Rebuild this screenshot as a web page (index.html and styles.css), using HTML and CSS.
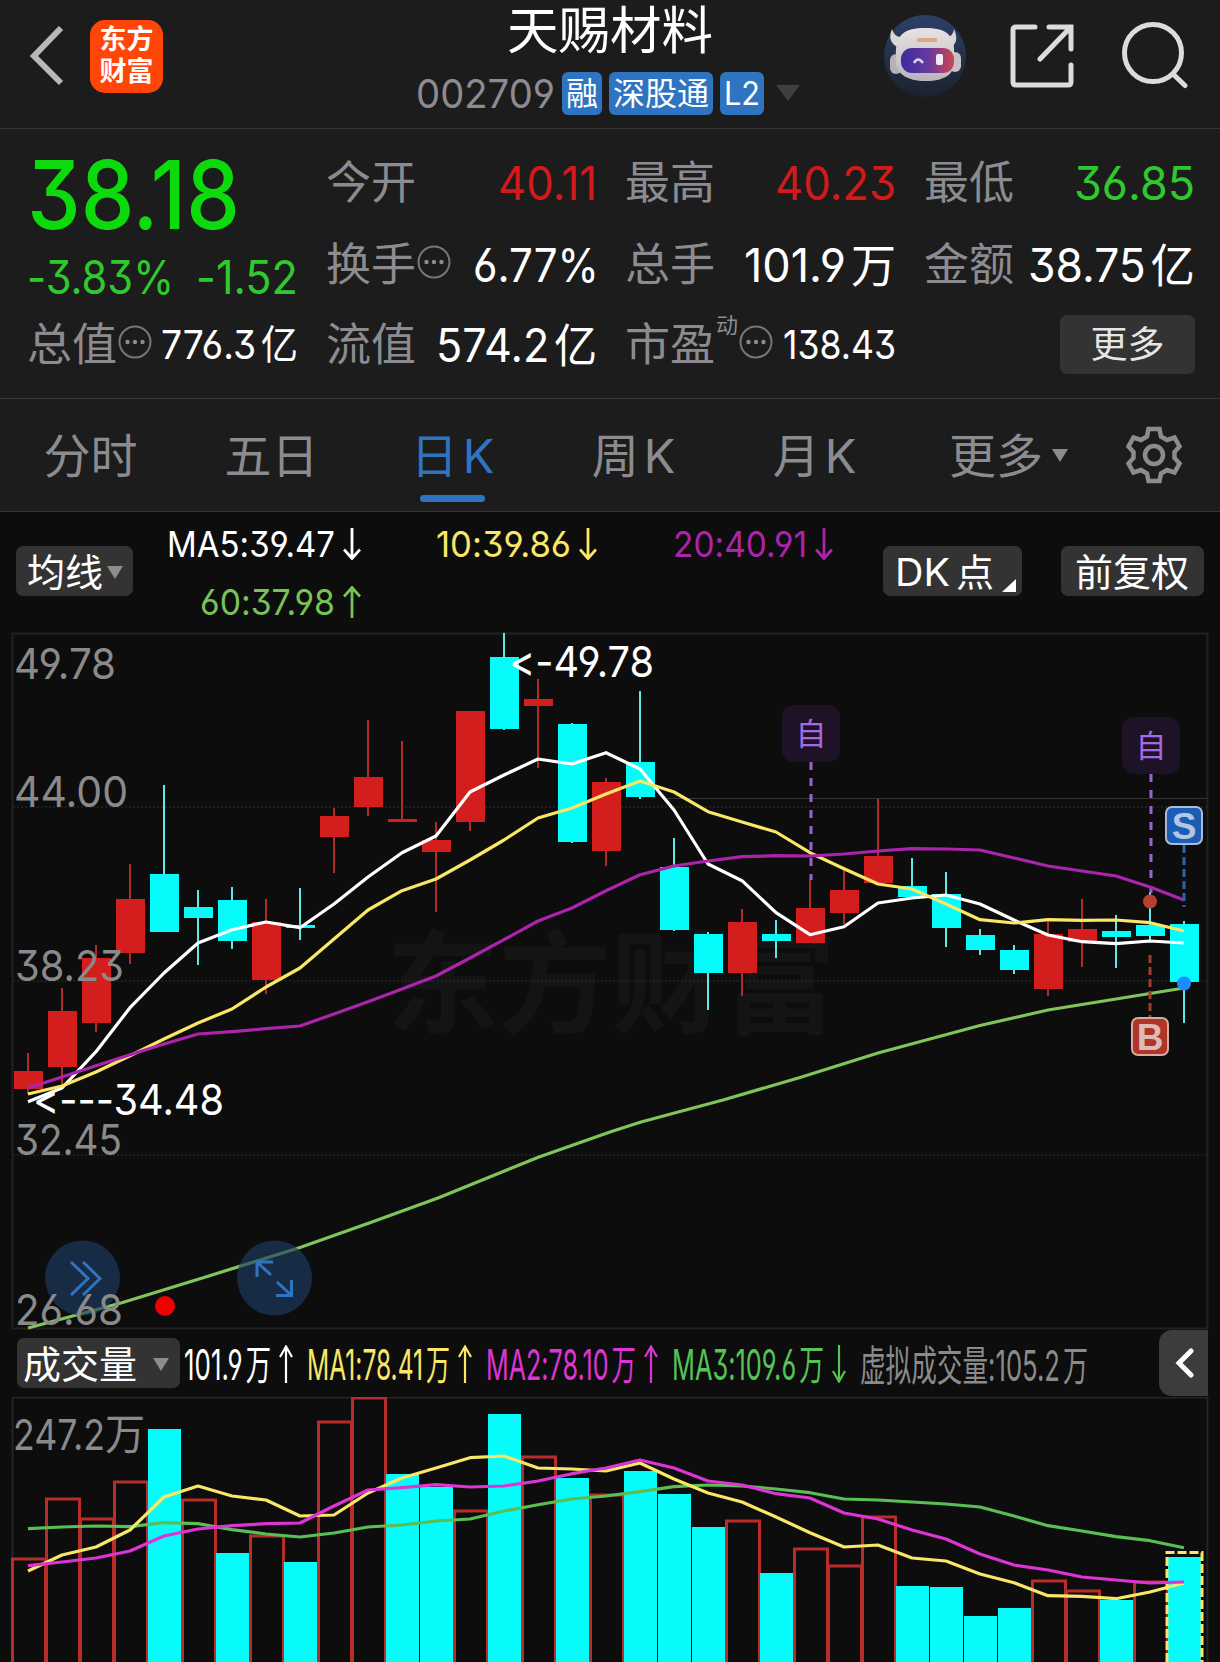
FILE: index.html
```
<!DOCTYPE html>
<html lang="zh-CN">
<head>
    <meta charset="UTF-8">
    <meta name="viewport" content="width=device-width, initial-scale=1.0">
    <title>天赐材料 002709</title>
    <link rel="stylesheet" href="styles.css">
</head>
<body>

<!-- shared icons -->
<svg class="defs" width="0" height="0">
    <symbol id="i-down" viewBox="0 0 18 32"><path d="M9 0V30M1 21.500L9 30.500L17 21.500"/></symbol>
    <symbol id="i-up" viewBox="0 0 18 32"><path d="M9 32V2M1 10.500L9 1.500L17 10.500"/></symbol>
    <symbol id="i-down-tall" viewBox="0 0 14 38"><path d="M7 0V36M1 26L7 36.500L13 26"/></symbol>
    <symbol id="i-up-tall" viewBox="0 0 14 38"><path d="M7 38V2M1 12L7 1.500L13 12"/></symbol>
    <symbol id="i-dots" viewBox="0 0 34 34">
        <circle cx="17" cy="17" r="15.500" fill="none" stroke="#77777a" stroke-width="2"/>
        <circle cx="9.500" cy="17" r="2.200"/><circle cx="17" cy="17" r="2.200"/><circle cx="24.500" cy="17" r="2.200"/>
    </symbol>
</svg>

<header class="header">
    <div class="header-left">
        <svg class="back" width="40" height="64" viewBox="0 0 40 64"><path d="M35 4L8 32L35 59"/></svg>
        <div class="logo">东方<br>财富</div>
    </div>
    <div class="header-title">
        <h1>天赐材料</h1>
        <div class="code-row">
            <span class="code" data-w="139">002709</span>
            <span class="tag">融</span>
            <span class="tag">深股通</span>
            <span class="tag"><span data-w="36">L2</span></span>
            <i class="tri tri-code"></i>
        </div>
    </div>
    <div class="header-right">
        <svg width="84" height="84" viewBox="0 0 84 84">
            <defs>
                <linearGradient id="bg" x1="0" y1="0" x2="0" y2="1"><stop offset="0" stop-color="#2c4067"/><stop offset="1" stop-color="#1c222d"/></linearGradient>
                <linearGradient id="visor" x1="0" y1="0" x2="1" y2="0"><stop offset="0" stop-color="#3a2c9c"/><stop offset=".55" stop-color="#6b3a9e"/><stop offset="1" stop-color="#d0454f"/></linearGradient>
                <linearGradient id="helm" x1="0" y1="0" x2="0" y2="1"><stop offset="0" stop-color="#e6e3e4"/><stop offset="1" stop-color="#b9b4ba"/></linearGradient>
            </defs>
            <circle cx="42" cy="42" r="41" fill="url(#bg)"/>
            <path d="M9 15C5 24 8 31 17 34L24 22C15 25 11 21 9 15ZM71 15C75 24 74 31 66 34L58 22C67 25 70 21 71 15Z" fill="#d9d6d8"/>
            <rect x="7" y="40" width="12" height="20" rx="6" fill="#b5b1b6"/>
            <rect x="66" y="38" width="12" height="20" rx="6" fill="#c5c1c5"/>
            <path d="M13 42C12 20 22 14 42 14S73 20 71 42C74 60 62 67 43 67S11 60 13 42Z" fill="url(#helm)"/>
            <rect x="18" y="34" width="53" height="25" rx="11" fill="url(#visor)"/>
            <path d="M34 26H54" stroke="#d9a98a" stroke-width="4"/>
            <path d="M31 49Q35 42 40 49" fill="none" stroke="#dcd6f5" stroke-width="2.500"/>
            <rect x="53" y="40" width="7" height="11" rx="2" fill="#f4e9f4"/>
        </svg>
        <svg class="line-icon" width="66" height="66" viewBox="0 0 66 66"><path d="M26 4H7Q4 4 4 7V59Q4 62 7 62H59Q62 62 62 59V42M40 4H62V26M60 6L31 36"/></svg>
        <svg class="line-icon" width="68" height="68" viewBox="0 0 68 68"><circle cx="32" cy="32" r="28.500"/><path d="M52 53L64 64.500"/></svg>
    </div>
</header>

<section class="quote">
    <div class="price-cell">
        <div class="price"><span data-w="213">38.18</span></div>
        <div class="change"><span data-w="147">-3.83%</span><span data-w="102">-1.52</span></div>
    </div>
    <div class="stat"><label>今开</label><b class="red" data-w="99">40.11</b></div>
    <div class="stat"><label>最高</label><b class="red" data-w="121">40.23</b></div>
    <div class="stat"><label>最低</label><b class="green" data-w="121">36.85</b></div>
    <div class="stat"><label>换手</label><svg class="dots"><use href="#i-dots"/></svg><b class="pct" data-w="126">6.77%</b></div>
    <div class="stat"><label>总手</label><b data-w="152">101.9<i>万</i></b></div>
    <div class="stat"><label>金额</label><b data-w="167">38.75<i>亿</i></b></div>
    <div class="stat"><label>总值</label><svg class="dots"><use href="#i-dots"/></svg><b class="small" data-w="137">776.3<i>亿</i></b></div>
    <div class="stat"><label>流值</label><b data-w="161">574.2<i>亿</i></b></div>
    <div class="stat"><label>市盈</label><sup>动</sup><svg class="dots"><use href="#i-dots"/></svg><b class="small" data-w="113">138.43</b></div>
    <div class="stat"><button class="more">更多</button></div>
</section>

<nav class="tabs">
    <a>分时</a>
    <a>五日</a>
    <a class="active">日<span class="k">K</span></a>
    <a>周<span class="k">K</span></a>
    <a>月<span class="k">K</span></a>
    <a class="tab-more">更多<i class="tri"></i></a>
    <svg class="gear" width="58" height="60" viewBox="0 0 58 60">
        <path d="M23.500 4H34.500L36 11.500L42 15L49.500 12.500L54.500 21.500L49.500 27V33L54.500 38.500L49.500 47.500L42 45L36 48.500L34.500 56H23.500L22 48.500L16 45L8.500 47.500L3.500 38.500L8.500 33V27L3.500 21.500L8.500 12.500L16 15L22 11.500Z"/>
        <circle cx="29" cy="30" r="9"/>
    </svg>
</nav>

<section class="ma-bar">
    <button class="chip chip-ma">均线<i class="tri"></i></button>
    <div class="ma-list">
        <span class="c-white"><em data-w="168">MA5:39.47</em><svg class="arrow"><use href="#i-down"/></svg></span>
        <span class="c-yellow"><em data-w="135">10:39.86</em><svg class="arrow"><use href="#i-down"/></svg></span>
        <span class="c-purple"><em data-w="134">20:40.91</em><svg class="arrow"><use href="#i-down"/></svg></span>
        <span class="c-green"><em data-w="135">60:37.98</em><svg class="arrow"><use href="#i-up"/></svg></span>
    </div>
    <button class="chip chip-dk"><em data-w="55">DK</em>点<i class="corner"></i></button>
    <button class="chip chip-fq">前复权</button>
</section>

<svg class="chart" id="price-chart" width="1220" height="698" viewBox="0 632 1220 698"></svg>

<section class="vol-bar">
    <button class="chip chip-vol">成交量<i class="tri"></i></button>
    <div class="vol-list">
        <span class="c-white"><em data-w="87">101.9<i>万</i></em><svg class="arrow"><use href="#i-up-tall"/></svg></span>
        <span class="c-yellow"><em data-w="143">MA1:78.41<i>万</i></em><svg class="arrow"><use href="#i-up-tall"/></svg></span>
        <span class="c-pink"><em data-w="150">MA2:78.10<i>万</i></em><svg class="arrow"><use href="#i-up-tall"/></svg></span>
        <span class="c-lime"><em data-w="152">MA3:109.6<i>万</i></em><svg class="arrow"><use href="#i-down-tall"/></svg></span>
        <span class="c-gray"><em data-w="228">虚拟成交量:105.2<i>万</i></em></span>
    </div>
    <button class="collapse"><svg width="20" height="30" viewBox="0 0 20 30"><path d="M17 3L5 15L17 27"/></svg></button>
</section>

<svg class="chart" id="vol-chart" width="1220" height="265" viewBox="0 1397 1220 265"></svg>

<script src="chart.js"></script>
</body>
</html>
```
FILE: styles.css
```
* {
    box-sizing: border-box;
}
body {
    margin: 0;
    width: 1220px;
    height: 1662px;
    overflow: hidden;
    background-color: #0d0d0d;
    color: #fff;
    font-family: Inter, "Noto Sans CJK SC", sans-serif;
    font-feature-settings: "cv09", "cv03", "cv04", "calt" 0;
}
svg {
    display: block;
    flex: none;
}
.defs {
    position: absolute;
}
button {
    border: 0;
    padding: 0;
    color: #fff;
    font: inherit;
    background-color: #333;
    border-radius: 7px;
}
em, i, b {
    font-style: normal;
    font-weight: 400;
}
[data-w] {
    display: inline-block;
    white-space: nowrap;
    transform-origin: left center;
}
.tri {
    display: inline-block;
    border: 8px solid transparent;
    border-top: 13px solid #8c8c90;
    border-bottom: 0;
}

/* header */
.header {
    display: grid;
    grid-template-columns: 400px 420px 400px;
    height: 129px;
    background-color: #1c1c1c;
    border-bottom: 1px solid #363636;
}
.header-left {
    display: flex;
    align-items: flex-start;
    padding: 20px 0 0 26px;
}
.back {
    margin: 4px 24px 0 0;
    fill: none;
    stroke: #b8b8b8;
    stroke-width: 6;
}
.logo {
    width: 73px;
    height: 73px;
    padding-top: 4px;
    border-radius: 15px;
    background-color: #ff4508;
    font-size: 27px;
    font-weight: 700;
    line-height: 32px;
    text-align: center;
}
.header-title {
    text-align: center;
}
.header-title h1 {
    margin: 0;
    font-size: 51.5px;
    font-weight: 400;
    line-height: 60px;
}
.code-row {
    display: flex;
    align-items: center;
    height: 44px;
    margin: 11px 0 0 16px;
}
.code {
    padding-top: 1px;
    font-size: 40px;
    line-height: 44px;
    color: #8c8c90;
}
.tag {
    height: 43px;
    margin-left: 7px;
    padding: 0 4px;
    border-radius: 6px;
    background-color: #2f74c0;
    font-size: 32px;
    line-height: 43px;
}
.tri-code {
    margin-left: 12px;
    border-width: 16px 12px 0;
    border-top-color: #3f3f3f;
}
.header-right {
    display: flex;
    align-items: flex-start;
    padding: 14px 0 0 63px;
}
.line-icon {
    fill: none;
    stroke: #dcdcdc;
    stroke-width: 5;
    stroke-linecap: round;
}
.header-right .line-icon {
    margin: 9px 0 0 42px;
}
.header-right .line-icon + .line-icon {
    margin: 7px 0 0 46px;
}

/* quote */
.quote {
    display: grid;
    grid-template-columns: repeat(4, 271px);
    grid-template-rows: 82px 82px 78px;
    column-gap: 28px;
    height: 270px;
    padding: 12px 25px 0 27px;
    background-color: #1c1c1c;
    border-bottom: 1px solid #363636;
}
.price-cell {
    grid-row: span 2;
    color: #2fc92f;
}
.price {
    height: 108px;
    font-size: 95px;
    font-weight: 500;
    line-height: 108px;
    color: #0cda0c;
}
.change {
    display: flex;
    justify-content: space-between;
    font-size: 46px;
    line-height: 56px;
}
.stat {
    display: flex;
    align-items: center;
    font-size: 46px;
    line-height: 60px;
}
.stat label {
    padding-top: 2px;
    font-size: 45px;
    color: #8c8c90;
}
.stat b {
    padding-top: 1px;
    margin-left: auto;
}
.stat b i {
    margin-left: 5px;
    font-size: 46px;
}
.stat .small {
    font-size: 40px;
}
.stat .small i {
    font-size: 40px;
}
.stat .pct {
    position: relative;
    left: 2px;
}
.stat .red {
    color: #d21a1a;
}
.stat .green {
    color: #2fc92f;
}
.stat sup {
    margin: 0 0 38px 1px;
    font-size: 22px;
    line-height: 24px;
    color: #8c8c90;
    vertical-align: baseline;
}
.dots {
    width: 34px;
    height: 34px;
    margin: -4px 0 0 1px;
    fill: #8c8c90;
}
.more {
    width: 135px;
    height: 59px;
    margin-left: auto;
    font-size: 37px;
    color: #e6e6e6;
}

/* tabs */
.tabs {
    display: flex;
    align-items: center;
    height: 113px;
    background-color: #1c1c1c;
    border-bottom: 1px solid #363636;
    color: #8c8c90;
}
.tabs a {
    position: relative;
    width: 181px;
    padding-top: 1px;
    font-size: 47px;
    line-height: 112px;
    text-align: center;
}
.tabs .k {
    margin-left: 5px;
}
.tabs .active {
    color: #2f74c0;
}
.tabs .active::after {
    content: "";
    position: absolute;
    left: 58px;
    top: 96px;
    width: 65px;
    height: 7px;
    border-radius: 4px;
    background-color: #2f74c0;
}
.tabs .tab-more {
    display: flex;
    align-items: center;
    width: 130px;
    margin-left: 44px;
}
.tab-more .tri {
    margin-left: 9px;
}
.gear {
    margin-left: 46px;
    fill: none;
    stroke: #8c8c90;
    stroke-width: 4.500;
}

/* moving averages */
.ma-bar {
    display: flex;
    height: 120px;
    padding-left: 16px;
}
.chip {
    display: flex;
    flex: none;
    align-items: center;
    height: 50px;
    margin-top: 34px;
    padding-top: 2px;
    font-size: 38px;
    line-height: 48px;
}
.chip-ma {
    width: 117px;
    padding-left: 11px;
}
.chip-ma .tri {
    margin-left: 4px;
}
.ma-list {
    display: grid;
    flex: none;
    grid-template-columns: repeat(3, 236px);
    grid-auto-rows: 58px;
    width: 708px;
    margin: 3px 50px 0 -8px;
}
.ma-list span {
    display: flex;
    align-items: center;
    justify-content: flex-end;
    font-size: 36px;
}
.arrow {
    width: 18px;
    height: 32px;
    margin-left: 8px;
    fill: none;
    stroke: currentColor;
    stroke-width: 2.800;
}
.chip-dk {
    width: 139px;
    padding-left: 12px;
}
.corner {
    margin: 27px 0 0 8px;
    border-left: 14px solid transparent;
    border-bottom: 13px solid #fff;
}
.chip-fq {
    width: 143px;
    margin-left: 39px;
    padding-left: 14px;
}
.c-white { color: #fff; }
.c-yellow { color: #fae767; }
.c-purple { color: #ac24ac; }
.c-green { color: #78c257; }
.c-pink { color: #dd35d5; }
.c-lime { color: #55c455; }
.c-gray { color: #8a8a8a; }

/* volume */
.vol-bar {
    display: flex;
    height: 67px;
    padding-left: 17px;
}
.chip-vol {
    width: 163px;
    margin-top: 8px;
    padding-left: 6px;
}
.chip-vol .tri {
    margin-left: 16px;
}
.vol-list {
    display: flex;
    align-items: center;
    width: 979px;
    padding: 0 0 3px 4px;
    font-size: 42px;
}
.vol-list span {
    display: flex;
    align-items: center;
    margin-right: 14px;
}
.vol-list em i {
    margin-left: 5px;
    font-size: 41px;
}
.vol-list .arrow {
    width: 14px;
    height: 38px;
    margin: 3px 0 0 8px;
    stroke-width: 2.200;
}
.collapse {
    width: 49px;
    height: 66px;
    padding-left: 15px;
    border-radius: 13px 0 0 13px;
    background-color: #3c3c3c;
}
.collapse path {
    fill: none;
    stroke: #fff;
    stroke-width: 5;
    stroke-linecap: round;
}

/* charts */
.chart text {
    fill: #8a8a8a;
    font-size: 43px;
}
.chart .mark {
    fill: #fff;
}
.chart .watermark {
    fill: #141414;
    font-size: 112px;
    font-weight: 700;
}
.chart .flag {
    fill: #a56ae0;
    font-size: 31px;
}
.chart .trade {
    font-family: "Liberation Sans", sans-serif;
    font-size: 37px;
    font-weight: 700;
    text-anchor: middle;
}
.chart .sell { fill: #b3c6e2; }
.chart .buy { fill: #dcbab6; }
```
FILE: chart.js
```
const STEP = 34;
const FIRST = 28;
const RED = '#d41e1e';
const CYAN = '#06fbfb';

// high, body top, body bottom, low, up(1) / down(0)
const candles = [
    [1053, 1071, 1089, 1094, 1], [988, 1011, 1067, 1084, 1], [945, 958, 1023, 1032, 1], [864, 899, 953, 964, 1],
    [785, 874, 932, 932, 0], [890, 907, 918, 965, 0], [887, 900, 941, 949, 0], [899, 922, 980, 994, 1],
    [888, 925, 928, 940, 0], [808, 816, 837, 873, 1], [720, 777, 807, 816, 1], [741, 819, 822, 822, 1],
    [822, 840, 852, 912, 1], [711, 711, 822, 831, 1], [633, 657, 729, 730, 0], [679, 699, 706, 768, 1],
    [723, 724, 842, 843, 0], [778, 782, 851, 866, 1], [691, 762, 797, 799, 0], [838, 867, 930, 931, 0],
    [932, 934, 973, 1010, 0], [909, 922, 973, 996, 1], [920, 934, 941, 958, 0], [879, 908, 943, 943, 1],
    [869, 890, 913, 924, 1], [799, 856, 883, 883, 1], [858, 886, 897, 897, 0], [872, 894, 928, 947, 0],
    [929, 935, 950, 955, 0], [945, 950, 970, 974, 0], [922, 934, 989, 996, 1], [899, 929, 942, 967, 1],
    [915, 931, 937, 968, 0], [892, 925, 936, 941, 0], [921, 924, 982, 1023, 0]
];
const ma5 = [1101.7, 1088, 1051.7, 1007.7, 973, 943, 929.7, 922, 927.7, 904, 877, 852.7, 836, 792, 775, 759, 764, 752.7, 769, 810, 864, 880.7, 912.7, 934.7, 926.7, 903, 898, 895, 904, 920, 935, 941.7, 943.7, 941, 943];
const ma10 = [1094, 1086, 1072, 1055.7, 1039, 1023, 1009, 987, 968, 939, 910, 890.7, 879, 860, 840, 818, 808, 794, 781, 792, 811.7, 822, 832, 852.7, 868.7, 884, 889, 904, 919.7, 923, 919.7, 920.3, 920, 922.7, 931];
const ma20 = [1088, 1077, 1065.7, 1054.7, 1044, 1034, 1031.7, 1028.7, 1026, 1014, 1001.7, 989, 976, 958, 939.7, 921, 908, 890.7, 874.7, 866, 861, 856.7, 855.7, 856, 854, 851, 848.7, 849, 850, 858, 866, 871, 876, 887, 900];
const ma60 = '28,1328 121,1303 204,1277.500 300,1247.500 372,1222 438,1198 539,1157 610,1132 641,1122 723,1100 800,1077.500 878,1053 980,1025.500 1048,1010 1116,999 1184,988';

// bar top, up / down
const volumes = [
    [1559, 1], [1499, 1], [1519, 1], [1482, 1], [1429, 0], [1500, 1], [1553, 0], [1536, 1], [1562, 0], [1422, 1],
    [1398, 1], [1474, 0], [1487, 0], [1511, 1], [1414, 0], [1457, 1], [1478, 0], [1495, 1], [1471, 0], [1494, 0],
    [1527, 0], [1521, 1], [1573, 0], [1549, 1], [1566, 1], [1517, 1], [1586, 0], [1587, 0], [1616, 0], [1608, 0],
    [1581, 1], [1591, 1], [1600, 0], [1582, 1], [1557, 0]
];
const vma1 = [1571, 1555, 1547, 1530, 1497, 1486, 1496, 1500, 1516, 1515, 1493, 1478, 1468, 1457.7, 1456, 1468, 1469, 1471, 1463, 1479, 1493, 1502, 1517, 1532.7, 1547, 1545, 1558, 1561, 1574, 1582.7, 1595.7, 1596.3, 1598.7, 1592, 1583];
const vma2 = [1565.7, 1562, 1558, 1551, 1536, 1529, 1525.7, 1523.7, 1523, 1506, 1490, 1487.7, 1484.7, 1487, 1486, 1481, 1473.7, 1468, 1460, 1468, 1481, 1485, 1493.7, 1498, 1513, 1519, 1530, 1539, 1554, 1565, 1570, 1577, 1580, 1583, 1582];
const vma3 = [1528.7, 1527, 1526, 1526.7, 1522.7, 1523.7, 1529.7, 1534, 1537, 1533, 1527, 1525, 1521, 1519, 1511, 1504.7, 1499, 1496, 1491.7, 1486.7, 1485, 1486, 1489, 1492.7, 1499, 1500, 1502, 1504, 1507, 1516, 1525.7, 1531, 1536.7, 1540.7, 1547.7];

function x(i) {
    return FIRST + i * STEP;
}

function rect(left, top, w, h, fill, extra = '') {
    return `<rect x="${left}" y="${top}" width="${w}" height="${h}" fill="${fill}" ${extra}/>`;
}

function seg(x1, y1, x2, y2, color, width, dash = '') {
    return `<line x1="${x1}" y1="${y1}" x2="${x2}" y2="${y2}" stroke="${color}" stroke-width="${width}" stroke-dasharray="${dash}"/>`;
}

function poly(points, color) {
    const list = Array.isArray(points) ? points.map((y, i) => `${x(i)},${y}`).join(' ') : points;
    return `<polyline points="${list}" fill="none" stroke="${color}" stroke-width="3.200" stroke-linejoin="round"/>`;
}

function label(text, left, base, w, cls = '') {
    return `<text x="${left}" y="${base}" textLength="${w}" lengthAdjust="spacingAndGlyphs" class="${cls}">${text}</text>`;
}

function drawPrice() {
    let s = label('东方财富', 386, 1025, 450, 'watermark');
    s += rect(12.5, 633.5, 1195, 695, 'none', 'stroke="#222" stroke-width="2"');
    [807, 981, 1155].forEach(y => s += seg(13, y, 1207, y, '#262626', 1.5, '2 2'));
    s += seg(667, 798.5, 1207, 798.5, '#363636', 1);

    candles.forEach(([high, top, bottom, low, up], i) => {
        s += seg(x(i), high, x(i), low, up ? '#b22a26' : '#5fe9e6', 2);
        s += rect(x(i) - 14, top, 29, bottom - top, up ? RED : CYAN);
    });

    // watch-list flags
    [[811, 705, 880], [1151, 717, 893]].forEach(([cx, top, end]) => {
        s += seg(cx, top + 57, cx, end, '#9c5fd6', 3, '8 8');
        s += rect(cx - 29, top, 58, 57, '#1e1226', 'rx="12"');
        s += `<text x="${cx - 15.5}" y="${top + 40}" class="flag">自</text>`;
    });

    s += poly(ma5, '#fff') + poly(ma10, '#fae767') + poly(ma20, '#ac24ac') + poly(ma60, '#80c45c');

    // trades
    s += seg(1184, 845, 1184, 907, '#2d62a8', 3, '8 4');
    s += rect(1166, 807, 36, 37, '#1c5cb4', 'rx="6" stroke="#a9bbd6" stroke-width="2"');
    s += '<text x="1184" y="839" class="trade sell">S</text>';
    s += '<circle cx="1184" cy="983.500" r="7" fill="#1a8cff"/>';
    s += seg(1150, 955, 1150, 1017, '#a03c30', 3, '8 4');
    s += rect(1132, 1018, 36, 37, '#b03428', 'rx="6" stroke="#d8aaa4" stroke-width="2"');
    s += '<text x="1150" y="1050" class="trade buy">B</text>';
    s += '<circle cx="1150" cy="901.500" r="7" fill="#b83f2e"/>';

    // floating buttons
    s += '<circle cx="82.500" cy="1278" r="37.500" fill="#1f3c63" fill-opacity=".65"/>';
    s += '<path d="M71 1262L88 1278.500L71 1295M83 1262L100 1278.500L83 1295" fill="none" stroke="#2f74c0" stroke-width="3"/>';
    s += '<circle cx="274.500" cy="1278" r="37.500" fill="#1f3c63" fill-opacity=".65"/>';
    s += '<path d="M271 1275L257 1262M257 1277V1262H273M277 1282L291 1295M276 1295.500H291.500V1280" fill="none" stroke="#2f74c0" stroke-width="3"/>';
    s += '<circle cx="165" cy="1306" r="10" fill="#f00000"/>';

    s += label('49.78', 14, 679, 102) + label('44.00', 14, 807, 114) + label('38.23', 15, 981, 109);
    s += label('32.45', 15, 1155, 107) + label('26.68', 15, 1325, 108);
    s += label('&lt;-49.78', 509, 677, 145, 'mark');
    s += label('&lt;---34.48', 33, 1115, 191, 'mark');
    document.getElementById('price-chart').innerHTML = s;
}

function drawVolume() {
    let s = rect(12.5, 1397.5, 1195, 300, 'none', 'stroke="#252525" stroke-width="2"');
    volumes.forEach(([top, up], i) => {
        if (up) {
            s += rect(x(i) - 15.5, top, 33, 300, 'none', 'stroke="#b82c2a" stroke-width="3"');
        }
    });
    volumes.forEach(([top, up], i) => {
        if (!up) {
            s += rect(x(i) - 16, top, 33, 300, CYAN);
        }
    });
    // estimated volume for today
    s += '<path d="M1167 1662V1552.500H1202V1662" fill="none" stroke="#fae767" stroke-width="3" stroke-dasharray="9 3"/>';
    s += poly(vma3, '#58bf55') + poly(vma1, '#fae767') + poly(vma2, '#dd35d5');
    s += label('247.2', 13, 1450, 92) + label('万', 105, 1450, 40);
    document.getElementById('vol-chart').innerHTML = s;
}

function fitText() {
    document.querySelectorAll('[data-w]').forEach(el => {
        const natural = el.getBoundingClientRect().width;
        const target = Number(el.dataset.w);
        el.style.transform = `scaleX(${target / natural})`;
        el.style.marginRight = `${target - natural}px`;
    });
    // DK keeps a gap before the next character
    const dk = document.querySelector('.chip-dk em');
    dk.style.marginRight = `${parseFloat(dk.style.marginRight) + 6}px`;
}

drawPrice();
drawVolume();
fitText();
```
